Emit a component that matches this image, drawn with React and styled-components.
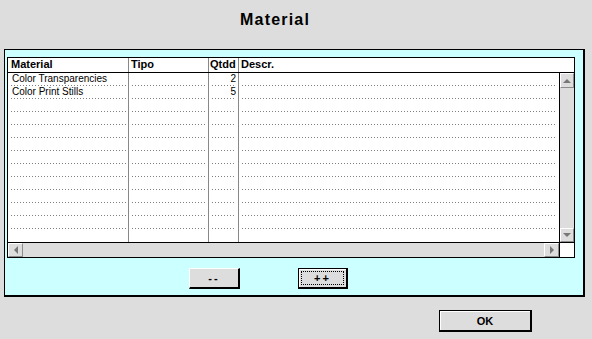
import React from "react";
import styled, { createGlobalStyle, css } from "styled-components";

const GlobalStyle = createGlobalStyle`
  html, body {
    margin: 0;
    padding: 0;
    background: #dddddd;
  }
  * {
    box-sizing: border-box;
  }
`;

const rows = [
  { material: "Color Transparencies", tipo: "", qtdd: "2", descr: "" },
  { material: "Color Print Stills", tipo: "", qtdd: "5", descr: "" },
];

const EMPTY_ROWS = 11;

export default function App() {
  const allRows = [...rows];
  for (let i = 0; i < EMPTY_ROWS; i++) {
    allRows.push({ material: "", tipo: "", qtdd: "", descr: "" });
  }

  return (
    <>
      <GlobalStyle />
      <Page>
        <TitleBar>Material</TitleBar>
        <Panel>
          <GridBox>
            <HeaderRow>
              <HeadCell $first>Material</HeadCell>
              <HeadCell>Tipo</HeadCell>
              <HeadCell $tight>Qtdd</HeadCell>
              <HeadCell $last>Descr.</HeadCell>
            </HeaderRow>
            <Body>
              <Rows>
                {allRows.map((row, i) => (
                  <Row key={i}>
                    <Cell $first>{row.material}</Cell>
                    <Cell>{row.tipo}</Cell>
                    <Cell $number>{row.qtdd}</Cell>
                    <Cell $last>{row.descr}</Cell>
                  </Row>
                ))}
              </Rows>
              <VScroll>
                <ArrowButton $tall>
                  <Arrow dir="up" />
                </ArrowButton>
                <Track />
                <ArrowButton>
                  <Arrow dir="down" />
                </ArrowButton>
              </VScroll>
            </Body>
            <HScroll>
              <ArrowButton $wide>
                <Arrow dir="left" />
              </ArrowButton>
              <Track />
              <ArrowButton $wide>
                <Arrow dir="right" />
              </ArrowButton>
              <Corner />
            </HScroll>
          </GridBox>
          <ButtonRow>
            <PanelButton>--</PanelButton>
            <PanelButton $focused>
              <FocusRing>++</FocusRing>
            </PanelButton>
          </ButtonRow>
        </Panel>
        <Footer>
          <OkButton>OK</OkButton>
        </Footer>
      </Page>
    </>
  );
}

function Arrow({ dir }) {
  const points = {
    up: "0,4 4,0 8,4",
    down: "0,0 8,0 4,4",
    left: "4,0 4,8 0,4",
    right: "0,0 0,8 4,4",
  }[dir];
  const vertical = dir === "up" || dir === "down";
  return (
    <svg
      width={vertical ? 8 : 4}
      height={vertical ? 4 : 8}
      viewBox={vertical ? "0 0 8 4" : "0 0 4 8"}
    >
      <polygon points={points} fill="#777777" />
    </svg>
  );
}

const Page = styled.div`
  width: 592px;
  height: 339px;
  overflow: hidden;
  background: #dddddd;
  font-family: "Liberation Sans", Arial, sans-serif;
  color: #000;
`;

const TitleBar = styled.div`
  height: 49px;
  padding: 11px 0 0 240px;
  font-size: 16px;
  line-height: 18px;
  font-weight: bold;
  letter-spacing: 1.2px;
`;

const Panel = styled.div`
  margin-left: 4px;
  width: 581px;
  height: 248px;
  background: #ccffff;
  border: 1px solid #000;
  border-right-width: 2px;
  border-bottom-width: 2px;
  padding: 7px 0 0 2px;
`;

const GridBox = styled.div`
  width: 568px;
  height: 201px;
  border: 1px solid #000;
  background: #fff;
  display: flex;
  flex-direction: column;
`;

const columns = css`
  display: grid;
  grid-template-columns: 121px 80px 30px 1fr;
`;

const HeaderRow = styled.div`
  ${columns};
  height: 15px;
  border-bottom: 1px solid #000;
`;

const HeadCell = styled.div`
  font-size: 11px;
  font-weight: bold;
  line-height: 13px;
  padding: 0 0 0 ${(p) => (p.$first ? 3 : p.$tight ? 1 : 2)}px;
  border-right: ${(p) => (p.$last ? "none" : "1px solid #888888")};
  white-space: nowrap;
  overflow: hidden;
`;

const Body = styled.div`
  display: flex;
  height: 169px;
`;

const Rows = styled.div`
  width: 551px;
  display: flex;
  flex-direction: column;
`;

const Row = styled.div`
  ${columns};
  height: 13px;

  &:last-child > div {
    background: none;
  }
`;

const Cell = styled.div`
  font-size: 10px;
  line-height: 12px;
  padding: 0 2px 0 3px;
  text-indent: ${(p) => (p.$first ? 1 : 0)}px;
  text-align: ${(p) => (p.$number ? "right" : "left")};
  border-right: ${(p) => (p.$last ? "none" : "1px solid #888888")};
  background-image: linear-gradient(to right, #808080 1px, transparent 1px);
  background-size: 3px 1px;
  background-repeat: repeat-x;
  background-position: left bottom;
  background-clip: content-box;
  background-origin: content-box;
  white-space: nowrap;
  overflow: hidden;
`;

const VScroll = styled.div`
  width: 15px;
  border-left: 1px solid #000;
  display: flex;
  flex-direction: column;
  background: #dddddd;
`;

const HScroll = styled.div`
  height: 15px;
  border-top: 1px solid #000;
  display: flex;
  background: #dddddd;
`;

const ArrowButton = styled.div`
  flex: none;
  width: ${(p) => (p.$wide ? "15px" : "100%")};
  height: ${(p) => (p.$tall ? "15px" : p.$wide ? "100%" : "14px")};
  background: #dddddd;
  border-top: 1px solid #fff;
  border-left: 1px solid #fff;
  border-right: 1px solid #8c8c8c;
  border-bottom: 1px solid #8c8c8c;
  display: flex;
  align-items: center;
  justify-content: center;
`;

const Track = styled.div`
  flex: 1;
  background: #dddddd;
`;

const Corner = styled.div`
  width: 15px;
  border-left: 1px solid #000;
  background: #fff;
`;

const ButtonRow = styled.div`
  display: flex;
  gap: 58px;
  margin-top: 10px;
  padding-left: 182px;
`;

const PanelButton = styled.div`
  width: ${(p) => (p.$focused ? 50 : 51)}px;
  height: 21px;
  background: #dddddd;
  font-size: 11px;
  font-weight: bold;
  letter-spacing: 2px;
  display: flex;
  align-items: center;
  justify-content: center;
  border-top: 1px solid ${(p) => (p.$focused ? "#000" : "#fff")};
  border-left: 1px solid ${(p) => (p.$focused ? "#000" : "#fff")};
  border-right: 2px solid #000;
  border-bottom: 2px solid #000;
  box-shadow: ${(p) => (p.$focused ? "inset 1px 1px 0 #fff" : "none")};
  padding: ${(p) => (p.$focused ? "2px" : "0")};
`;

const FocusRing = styled.span`
  flex: 1;
  align-self: stretch;
  border: 1px dotted #000;
  display: flex;
  align-items: center;
  justify-content: center;
  line-height: 12px;
`;

const Footer = styled.div`
  padding: 13px 0 0 439px;
`;

const OkButton = styled.div`
  width: 93px;
  height: 22px;
  background: #dddddd;
  border: 1px solid #000;
  border-right-width: 2px;
  border-bottom-width: 2px;
  box-shadow: inset 1px 1px 0 #fff;
  font-size: 11px;
  font-weight: bold;
  display: flex;
  align-items: center;
  justify-content: center;
`;
